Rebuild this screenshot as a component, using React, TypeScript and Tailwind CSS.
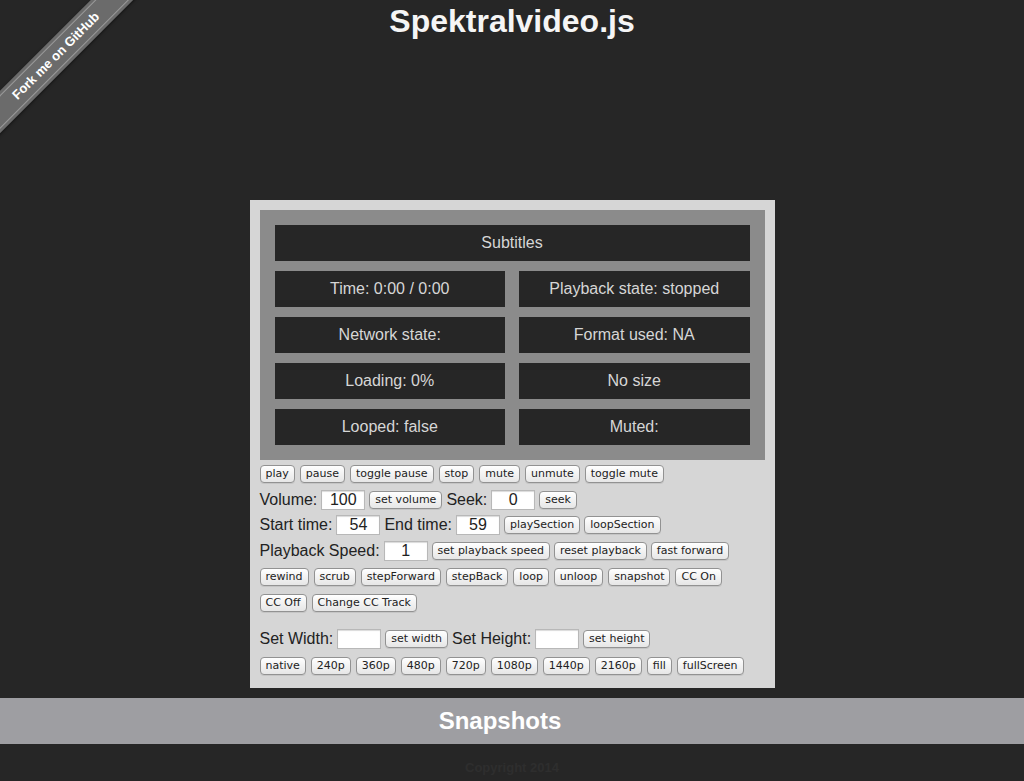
import React from "react";

const btn =
  "h-[18px] px-[5px] rounded-[4px] border border-[#929292] bg-gradient-to-b from-[#ffffff] to-[#e6e6e6] text-[11px] leading-[16px] text-[#222] shadow-[0_1px_0_rgba(0,0,0,0.08)] font-['DejaVu_Sans',sans-serif] whitespace-nowrap";
const field =
  "w-[44px] h-[20px] bg-white border border-[#b8b8b8] text-center text-[16px] leading-[18px] text-[#222] shadow-[inset_0_1px_1px_rgba(0,0,0,0.15)]";
const label = "text-[16px] text-[#222] whitespace-nowrap";

const Btn = ({ children }: { children: React.ReactNode }) => (
  <button className={btn}>{children}</button>
);

const Field = ({ value }: { value?: string }) => <div className={field}>{value}</div>;

const Cell = ({ children }: { children: React.ReactNode }) => (
  <div className="h-[36px] bg-[#262626] flex items-center justify-center text-[16px] text-[#d6d6d6]">
    {children}
  </div>
);

export default function App() {
  return (
    <div className="min-h-[781px] bg-[#262626] font-['Liberation_Sans',Arial,sans-serif] relative overflow-hidden">
      {/* fork ribbon */}
      <div className="absolute top-0 left-0 w-[150px] h-[150px] overflow-hidden">
        <div className="absolute left-[-44px] top-[41px] w-[200px] h-[30px] -rotate-45 bg-[#6b6b6b] flex items-center justify-center shadow-[0_1px_3px_rgba(0,0,0,0.5)]">
          <div className="w-full h-[24px] border-y border-[#9a9a9a] flex items-center justify-center text-white text-[13px] font-bold">
            Fork me on GitHub
          </div>
        </div>
      </div>

      <h1 className="text-center text-[32px] leading-[42px] font-bold text-[#f5f5f5]">
        Spektralvideo.js
      </h1>

      <div className="w-[525px] mx-auto mt-[158px] bg-[#d6d6d6] px-[10px] pt-[10px] pb-[8px]">
        <div className="bg-[#8b8b8b] p-[15px] flex flex-col gap-[10px]">
          <Cell>Subtitles</Cell>
          <div className="grid grid-cols-2 gap-x-[14px] gap-y-[10px]">
            <Cell>Time: 0:00 / 0:00</Cell>
            <Cell>Playback state: stopped</Cell>
            <Cell>Network state:</Cell>
            <Cell>Format used: NA</Cell>
            <Cell>Loading: 0%</Cell>
            <Cell>No size</Cell>
            <Cell>Looped: false</Cell>
            <Cell>Muted:</Cell>
          </div>
        </div>

        <div className="flex flex-col">
          <div className="h-[28px] flex items-center gap-[5px]">
            <Btn>play</Btn>
            <Btn>pause</Btn>
            <Btn>toggle pause</Btn>
            <Btn>stop</Btn>
            <Btn>mute</Btn>
            <Btn>unmute</Btn>
            <Btn>toggle mute</Btn>
          </div>
          <div className="h-[24px] flex items-center gap-[4px]">
            <span className={label}>Volume:</span>
            <Field value="100" />
            <Btn>set volume</Btn>
            <span className={label}>Seek:</span>
            <Field value="0" />
            <Btn>seek</Btn>
          </div>
          <div className="h-[26px] flex items-center gap-[4px]">
            <span className={label}>Start time:</span>
            <Field value="54" />
            <span className={label}>End time:</span>
            <Field value="59" />
            <Btn>playSection</Btn>
            <Btn>loopSection</Btn>
          </div>
          <div className="h-[26px] flex items-center gap-[4px]">
            <span className={label}>Playback Speed:</span>
            <Field value="1" />
            <Btn>set playback speed</Btn>
            <Btn>reset playback</Btn>
            <Btn>fast forward</Btn>
          </div>
          <div className="h-[26px] flex items-center gap-[5px]">
            <Btn>rewind</Btn>
            <Btn>scrub</Btn>
            <Btn>stepForward</Btn>
            <Btn>stepBack</Btn>
            <Btn>loop</Btn>
            <Btn>unloop</Btn>
            <Btn>snapshot</Btn>
            <Btn>CC On</Btn>
          </div>
          <div className="h-[26px] flex items-center gap-[5px]">
            <Btn>CC Off</Btn>
            <Btn>Change CC Track</Btn>
          </div>
          <div className="h-[26px] mt-[10px] flex items-center gap-[4px]">
            <span className={label}>Set Width:</span>
            <Field />
            <Btn>set width</Btn>
            <span className={label}>Set Height:</span>
            <Field />
            <Btn>set height</Btn>
          </div>
          <div className="h-[28px] flex items-center gap-[5px]">
            <Btn>native</Btn>
            <Btn>240p</Btn>
            <Btn>360p</Btn>
            <Btn>480p</Btn>
            <Btn>720p</Btn>
            <Btn>1080p</Btn>
            <Btn>1440p</Btn>
            <Btn>2160p</Btn>
            <Btn>fill</Btn>
            <Btn>fullScreen</Btn>
          </div>
        </div>
      </div>

      <div className="mt-[10px] h-[46px] bg-[#9e9ea2] flex items-center justify-center pr-[24px]">
        <h2 className="text-[24px] font-bold text-white">Snapshots</h2>
      </div>

      <div className="pt-[14px] text-center text-[13px] font-bold text-[#2e2e2e]">
        Copyright 2014
      </div>
    </div>
  );
}
